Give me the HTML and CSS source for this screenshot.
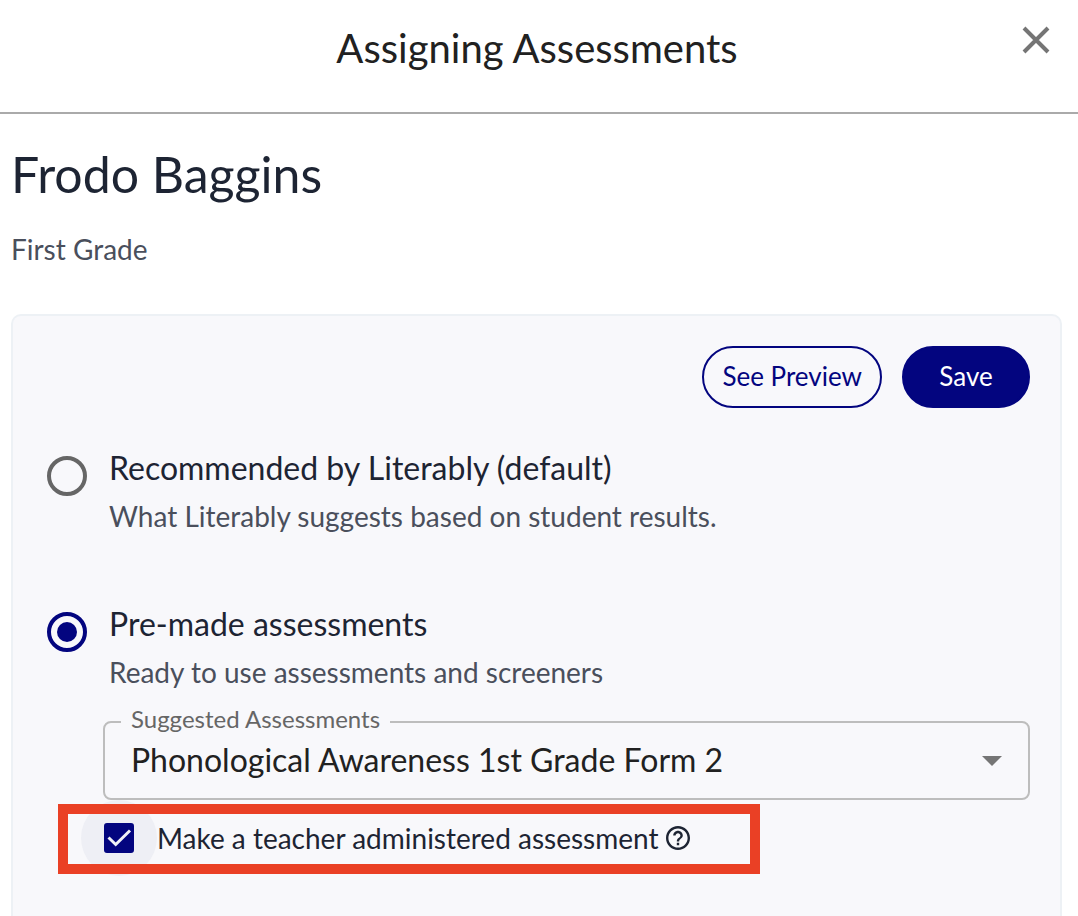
FILE: index.html
```html
<!DOCTYPE html>
<html lang="en">
<head>
  <meta charset="UTF-8">
  <title>Assigning Assessments</title>
  <link rel="stylesheet" href="styles.css">
</head>
<body>

  <header class="dialog-header">
    <h1 class="dialog-title">Assigning Assessments</h1>
    <button type="button" class="close-button" aria-label="Close">
      <svg viewBox="0 0 28 28" width="28" height="28">
        <path d="M2 2L26 26M26 2L2 26" stroke="#757575" stroke-width="4"/>
      </svg>
    </button>
  </header>

  <main class="content">
    <h2 class="student-name">Frodo Baggins</h2>
    <p class="student-grade">First Grade</p>

    <form class="card">
      <div class="actions">
        <button type="button" class="button">See Preview</button>
        <button type="submit" class="button button-primary">Save</button>
      </div>

      <div class="option">
        <input type="radio" class="radio" name="source" id="recommended">
        <div class="option-text">
          <label class="option-title" for="recommended">Recommended by Literably (default)</label>
          <p class="option-info">What Literably suggests based on student results.</p>
        </div>
      </div>

      <div class="option">
        <input type="radio" class="radio" name="source" id="premade" checked>
        <div class="option-text">
          <label class="option-title" for="premade">Pre-made assessments</label>
          <p class="option-info">Ready to use assessments and screeners</p>
        </div>
      </div>

      <fieldset class="select-field">
        <legend><label for="assessment">Suggested Assessments</label></legend>
        <div class="select-wrap">
          <select id="assessment" class="select">
            <option>Phonological Awareness 1st Grade Form 2</option>
          </select>
          <svg class="select-arrow" viewBox="0 0 20 10" width="20" height="10">
            <path d="M0 0H20L10 10Z" fill="#757575"/>
          </svg>
        </div>
      </fieldset>

      <div class="teacher-row">
        <span class="check-wrap">
          <input type="checkbox" class="checkbox" id="teacher" checked>
          <svg class="check-mark" viewBox="0 0 30 30" width="30" height="30">
            <path d="M4.500 14.500L11.700 21.500L26 7.500" fill="none" stroke="#f0f1f6" stroke-width="3"/>
          </svg>
        </span>
        <label class="teacher-label" for="teacher">Make a teacher administered assessment</label>
        <svg class="help-icon" viewBox="2 2 20 20" width="24" height="24">
          <path fill="#1d2433" d="M11 18h2v-2h-2v2zm1-16C6.480 2 2 6.480 2 12s4.480 10 10 10 10-4.480 10-10S17.520 2 12 2zm0 18c-4.410 0-8-3.590-8-8s3.590-8 8-8 8 3.590 8 8-3.590 8-8 8zm0-14c-2.210 0-4 1.790-4 4h2c0-1.100.9-2 2-2s2 .9 2 2c0 2-3 1.750-3 5h2c0-2.250 3-2.500 3-5 0-2.210-1.790-4-4-4z"/>
        </svg>
      </div>
    </form>
  </main>

</body>
</html>
```

FILE: styles.css
```css
* {
  box-sizing: border-box;
}

body {
  font-family: Lato, sans-serif;
  background: #fff;
  color: #1d2433;
  margin: 0;
  min-height: 100vh;
  display: flex;
  flex-direction: column;
}

h1, h2, p {
  margin: 0;
  font-weight: 400;
}

.dialog-header {
  display: grid;
  grid-template-columns: 56px 1fr 56px;
  padding: 24px 14px 40px 10px;
  border-bottom: 2px solid #aaa;
}

.dialog-title {
  grid-column: 2;
  font-size: 40px;
  line-height: 48px;
  text-align: center;
  color: #212121;
}

.close-button {
  display: flex;
  align-self: start;
  justify-self: center;
  margin-top: 2px;
  padding: 0;
  border: 0;
  background: none;
  cursor: pointer;
}

.content {
  flex: 1;
  display: flex;
  flex-direction: column;
  padding: 30px 16px 0 11px;
}

.student-name {
  font-size: 50px;
  line-height: 60px;
}

.student-grade {
  margin: 29px 0 49px;
  font-size: 28px;
  line-height: 32px;
  color: #4a4f5c;
}

.card {
  flex: 1;
  isolation: isolate;
  padding: 30px 30px 40px 34px;
  border: 2px solid #edf1f5;
  border-bottom: 0;
  border-radius: 10px 10px 0 0;
  background: #f8f8fb;
}

.actions {
  display: flex;
  justify-content: flex-end;
  gap: 20px;
  margin-bottom: 40px;
}

.button {
  padding: 12px 18px 14px;
  border: 2px solid #03057f;
  border-radius: 31px;
  background: none;
  color: #03057f;
  font-family: inherit;
  font-size: 26px;
  line-height: 32px;
  cursor: pointer;
}

.button-primary {
  min-width: 128px;
  background: #03057f;
  color: #fff;
}

.option {
  display: flex;
  gap: 22px;
  margin-bottom: 70px;
}

.radio {
  appearance: none;
  flex: none;
  width: 40px;
  height: 40px;
  margin: 8px 0 0;
  padding: 6px;
  border: 4px solid #666;
  border-radius: 50%;
}

.radio:checked {
  border-color: #03057f;
  background: #03057f content-box;
}

.option-title {
  display: block;
  font-size: 32px;
  line-height: 40px;
}

.option-info {
  margin-top: 10px;
  font-size: 28px;
  line-height: 36px;
  color: #4a4f5c;
}

/* the second option sits right on top of its drop-down */
.option:has(.radio:checked) {
  margin-bottom: 17px;
}

.select-field {
  margin: 0 0 4px 56px;
  padding: 0;
  border: 2px solid #bdbdbd;
  border-radius: 8px;
}

.select-field legend {
  margin-left: 16px;
  padding: 0 10px 6px;
  font-size: 24px;
  line-height: 24px;
  color: #666;
}

.select-wrap {
  display: grid;
  align-items: center;
}

.select {
  appearance: none;
  grid-area: 1 / 1;
  width: 100%;
  padding: 3px 60px 18px 26px;
  border: 0;
  background: none;
  color: #212121;
  font-family: inherit;
  font-size: 32px;
  line-height: 40px;
}

.select-arrow {
  grid-area: 1 / 1;
  justify-self: end;
  margin: 0 26px 13px 0;
  pointer-events: none;
}

.teacher-row {
  display: flex;
  align-items: center;
  width: 702px;
  max-width: 100%;
  height: 70px;
  margin-left: 11px;
  padding: 0 0 2px 36px;
  border: 10px solid #ea4025;
}

.check-wrap {
  display: grid;
  place-items: center;
  position: relative;
  margin-right: 23px;
}

/* hover ripple */
.check-wrap::before {
  content: "";
  position: absolute;
  z-index: -1;
  inset: -23px;
  border-radius: 50%;
  background: #eeeff5;
}

.checkbox {
  appearance: none;
  grid-area: 1 / 1;
  width: 30px;
  height: 30px;
  margin: 0;
  border: 3px solid #666;
  border-radius: 3px;
}

.checkbox:checked {
  border-color: #03057f;
  background: #03057f;
}

.check-mark {
  grid-area: 1 / 1;
  pointer-events: none;
}

.teacher-label {
  font-size: 28px;
  line-height: 36px;
}

.help-icon {
  margin-left: 8px;
}
```
